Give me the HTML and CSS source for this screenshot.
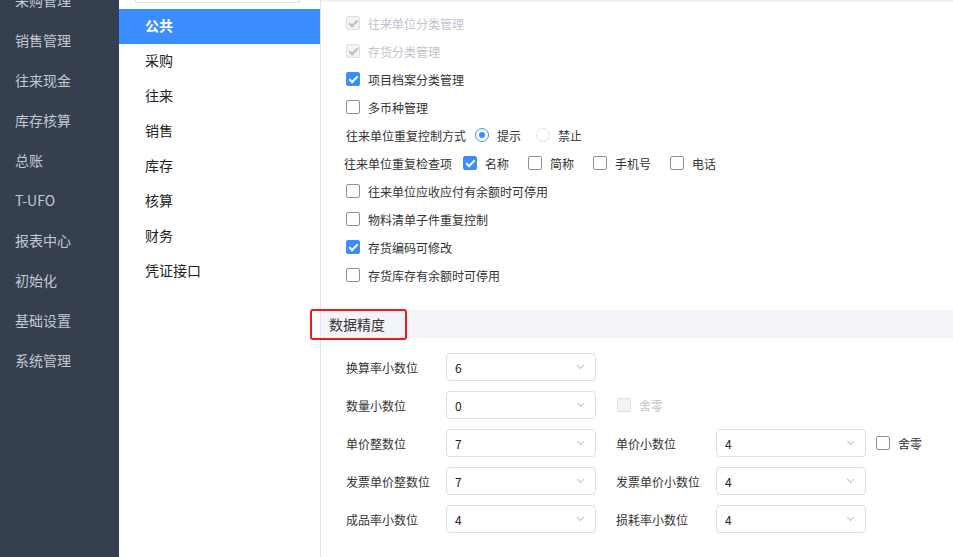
FILE: index.html
```html
<!DOCTYPE html>
<html lang="zh-CN">
<head>
<meta charset="utf-8">
<title>参数设置</title>
<link rel="stylesheet" href="styles.css">
</head>
<body>
<div class="app">
  <nav class="sidebar">
    <ul class="menu">
      <li>采购管理</li>
      <li>销售管理</li>
      <li>往来现金</li>
      <li>库存核算</li>
      <li>总账</li>
      <li>T-UFO</li>
      <li>报表中心</li>
      <li>初始化</li>
      <li>基础设置</li>
      <li>系统管理</li>
    </ul>
  </nav>
  <aside class="tabs">
    <div class="search"></div>
    <ul class="tab-list">
      <li class="active">公共</li>
      <li>采购</li>
      <li>往来</li>
      <li>销售</li>
      <li>库存</li>
      <li>核算</li>
      <li>财务</li>
      <li>凭证接口</li>
    </ul>
  </aside>
  <main class="content">
    <div class="options">
      <div class="row"><span class="cb checked disabled"></span><span class="lbl disabled-text">往来单位分类管理</span></div>
      <div class="row"><span class="cb checked disabled"></span><span class="lbl disabled-text">存货分类管理</span></div>
      <div class="row"><span class="cb checked"></span><span class="lbl">项目档案分类管理</span></div>
      <div class="row"><span class="cb"></span><span class="lbl">多币种管理</span></div>
      <div class="row">
        <span class="caption">往来单位重复控制方式</span>
        <span class="radio checked"></span><span class="lbl">提示</span>
        <span class="radio gap15"></span><span class="lbl">禁止</span>
      </div>
      <div class="row shift">
        <span class="caption c2">往来单位重复检查项</span>
        <span class="cb checked"></span><span class="lbl">名称</span>
        <span class="cb gap18"></span><span class="lbl">简称</span>
        <span class="cb gap18"></span><span class="lbl">手机号</span>
        <span class="cb gap18"></span><span class="lbl">电话</span>
      </div>
      <div class="row"><span class="cb"></span><span class="lbl">往来单位应收应付有余额时可停用</span></div>
      <div class="row"><span class="cb"></span><span class="lbl">物料清单子件重复控制</span></div>
      <div class="row"><span class="cb checked"></span><span class="lbl">存货编码可修改</span></div>
      <div class="row"><span class="cb"></span><span class="lbl">存货库存有余额时可停用</span></div>
    </div>

    <div class="section-head">
      <span class="section-title">数据精度</span>
      <span class="mark"></span>
    </div>

    <div class="form">
      <div class="frow">
        <div class="field"><label>换算率小数位</label><div class="select"><span>6</span><i class="chev"></i></div></div>
      </div>
      <div class="frow">
        <div class="field"><label>数量小数位</label><div class="select"><span>0</span><i class="chev"></i></div></div>
        <div class="extra first"><span class="cb disabled"></span><span class="lbl disabled-text">舍零</span></div>
      </div>
      <div class="frow">
        <div class="field"><label>单价整数位</label><div class="select"><span>7</span><i class="chev"></i></div></div>
        <div class="field second"><label>单价小数位</label><div class="select"><span>4</span><i class="chev"></i></div></div>
        <div class="extra"><span class="cb"></span><span class="lbl">舍零</span></div>
      </div>
      <div class="frow">
        <div class="field"><label>发票单价整数位</label><div class="select"><span>7</span><i class="chev"></i></div></div>
        <div class="field second"><label>发票单价小数位</label><div class="select"><span>4</span><i class="chev"></i></div></div>
      </div>
      <div class="frow">
        <div class="field"><label>成品率小数位</label><div class="select"><span>4</span><i class="chev"></i></div></div>
        <div class="field second"><label>损耗率小数位</label><div class="select"><span>4</span><i class="chev"></i></div></div>
      </div>
    </div>
  </main>
</div>
</body>
</html>
```

FILE: styles.css
```css
* { box-sizing: border-box; }
html, body {
  margin: 0;
  padding: 0;
  height: 100%;
  overflow: hidden;
  background: #fff;
  font-family: "Noto Sans CJK SC", "Microsoft YaHei", "Liberation Sans", sans-serif;
  color: #333;
}
ul { list-style: none; margin: 0; padding: 0; }

.app {
  display: flex;
  height: 557px;
}

/* left dark sidebar */
.sidebar {
  width: 119px;
  flex: none;
  background: #353f4e;
  overflow: hidden;
}
.menu { margin-top: -20px; }
.menu li {
  height: 40px;
  line-height: 40px;
  padding-left: 15px;
  font-size: 14px;
  color: #c3c9d1;
  white-space: nowrap;
}

/* second column */
.tabs {
  width: 202px;
  flex: none;
  border-right: 1px solid #e1e3e8;
  overflow: hidden;
}
.search {
  height: 32px;
  margin: -29px 20px 6px 16px;
  border: 1px solid #dcdfe6;
  border-radius: 2px;
}
.tab-list li {
  height: 35px;
  line-height: 33px;
  padding-left: 26px;
  font-size: 14px;
  color: #222;
}
.tab-list li.active {
  background: #3c8dff;
  color: #fff;
  font-weight: bold;
}

/* main content */
.content {
  flex: 1;
  border-top: 2px solid #f0f2f5;
  position: relative;
}
.options {
  padding: 7px 0 0 25px;
}
.row {
  height: 28px;
  display: flex;
  align-items: center;
  font-size: 12px;
}
.row.shift { margin-left: -2px; }
.lbl { margin-left: 8px; white-space: nowrap; }
.disabled-text { color: #c0c4cc; }
.caption { margin-right: 9px; white-space: nowrap; }
.caption.c2 { margin-right: 11px; }

.cb {
  width: 14px;
  height: 14px;
  flex: none;
  border: 1px solid #8f9399;
  border-radius: 2px;
  background: #fff;
  position: relative;
}
.cb.checked {
  background: #3c8dff;
  border-color: #3c8dff;
}
.cb.checked::after {
  content: "";
  position: absolute;
  left: 4px;
  top: 1px;
  width: 3px;
  height: 7px;
  border: solid #fff;
  border-width: 0 2px 2px 0;
  transform: rotate(45deg);
}
.cb.disabled {
  background: #f2f3f5;
  border-color: #dcdfe6;
}
.cb.checked.disabled::after { border-color: #b8bcc4; }
.gap18 { margin-left: 19px; }

.radio {
  width: 14px;
  height: 14px;
  flex: none;
  border-radius: 50%;
  border: 1px solid #e3e5e9;
  background: #fff;
  position: relative;
}
.radio.checked { border-color: #3c8dff; }
.radio.checked::after {
  content: "";
  position: absolute;
  left: 3px;
  top: 3px;
  width: 6px;
  height: 6px;
  border-radius: 50%;
  background: #3c8dff;
}
.gap15 { margin-left: 15px; }

/* section header */
.section-head {
  margin-top: 21px;
  height: 28px;
  background: #f3f4f8;
  display: flex;
  align-items: center;
  padding-left: 8px;
  position: relative;
}
.section-title { font-size: 14px; color: #333; }
.mark {
  position: absolute;
  left: -11px;
  top: -1px;
  width: 97px;
  height: 31px;
  border: 2px solid #f2191c;
  border-radius: 3px;
}

/* form */
.form { padding: 15px 0 0 25px; }
.frow {
  display: flex;
  align-items: center;
  height: 28px;
  margin-bottom: 10px;
}
.field { display: flex; align-items: center; }
.field.second { margin-left: 20px; }
.field label {
  width: 100px;
  font-size: 12px;
  color: #333;
  white-space: nowrap;
}
.select {
  width: 150px;
  height: 28px;
  border: 1px solid #dcdfe6;
  border-radius: 4px;
  display: flex;
  align-items: center;
  justify-content: space-between;
  padding: 0 12px 0 8px;
  font-size: 12px;
  color: #222;
}
.chev {
  width: 5px;
  height: 5px;
  border: solid #c0c4cc;
  border-width: 0 1px 1px 0;
  transform: rotate(45deg);
  margin-top: -3px;
}
.extra { display: flex; align-items: center; margin-left: 10px; font-size: 12px; }
.extra.first { margin-left: 21px; }
```
